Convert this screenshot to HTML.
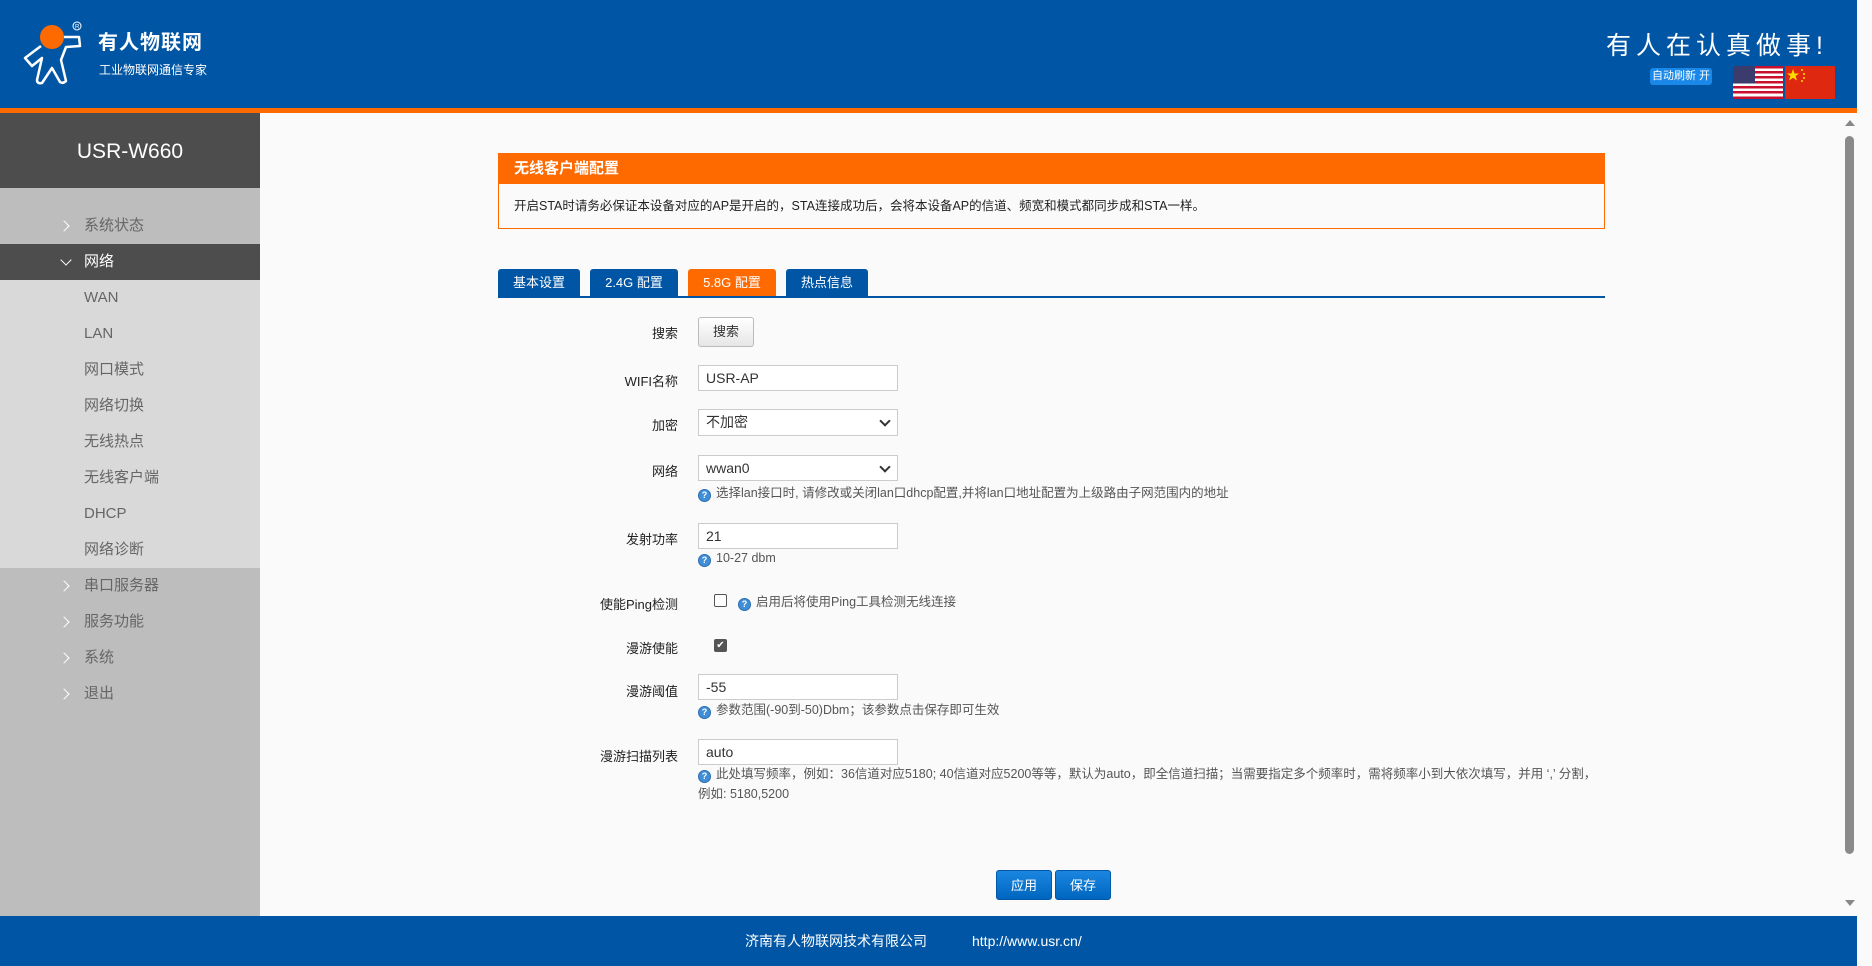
<!DOCTYPE html>
<html><head><meta charset="utf-8"><style>
*{margin:0;padding:0;box-sizing:border-box}
body{width:1872px;height:966px;overflow:hidden;background:#fafafa;font-family:"Liberation Sans","Noto Sans CJK SC",sans-serif;font-size:13px;color:#333;position:relative}
.hdr{position:absolute;left:0;top:0;width:1857px;height:108px;background:#0056a5}
.obar{position:absolute;left:0;top:108px;width:1857px;height:5px;background:#ff6a00}
.rstrip{position:absolute;left:1857px;top:0;width:15px;height:966px;background:#fafafa}
.side{position:absolute;left:0;top:113px;width:260px;height:803px;background:#bdbdbd}
.stitle{height:75px;background:#4d4d4d;color:#fff;font-size:21px;text-align:center;line-height:78px}
.it{position:absolute;left:0;width:260px;height:36px;line-height:36px;color:#666;font-size:15px;padding-left:84px}
.it .ar{position:absolute;left:60px;top:14px;width:8px;height:8px;border-right:1.5px solid #fff;border-top:1.5px solid #fff;transform:rotate(45deg)}
.it .dn{position:absolute;left:62px;top:12px;width:8px;height:8px;border-right:1.5px solid #fff;border-bottom:1.5px solid #fff;transform:rotate(45deg)}
.ft{position:absolute;left:0;top:916px;width:1857px;height:50px;background:#0056a5;color:#fff;font-size:14px;line-height:50px}
.lbl{position:absolute;width:180px;left:498px;text-align:right;font-size:13px;color:#222}
.inp{position:absolute;left:698px;width:200px;height:26px;background:#fff;border:1px solid #ccc;padding-left:7px;font-size:14px;line-height:24px;color:#333}
.sel::after{content:"";position:absolute;right:8px;top:7px;width:6px;height:6px;border-right:2px solid #333;border-bottom:2px solid #333;transform:rotate(45deg)}
.help{position:absolute;left:698px;font-size:12.5px;color:#555;line-height:22px}
.q{display:inline-block;width:13px;height:13px;border-radius:50%;background:#3f8fd8;border:1px solid #2a6db0;color:#fff;font-size:9px;text-align:center;line-height:11px;vertical-align:-1px;margin-right:5px;font-weight:bold}
.tab{position:absolute;top:269px;height:28px;line-height:28px;color:#fff;background:#0056a5;text-align:center;font-size:13px;border-radius:3px 3px 0 0}
.btn{position:absolute;top:870px;height:30px;line-height:30px;width:56px;background:linear-gradient(#1a86e0,#0066c0);color:#fff;text-align:center;border-radius:3px;font-size:13px;border:1px solid #0059a8}
</style></head><body>
<div class="hdr">
<svg style="position:absolute;left:22px;top:20px" width="66" height="68" viewBox="0 0 66 68">
<circle cx="30" cy="17" r="12" fill="#ff6a00"/>
<path d="M19 26 L3 38 L10 46 L20 38 L15 60 Q15 64 20 63 L30 48 L38 62 Q41 64 44 61 L39 40 L44 27 L58 26 L57 17 L42 17" fill="none" stroke="#fff" stroke-width="2.5" stroke-linejoin="round"/>
<circle cx="55" cy="6" r="4" fill="none" stroke="#fff" stroke-width="1"/>
<text x="53" y="8.5" fill="#fff" font-size="6">R</text>
</svg>
<div style="position:absolute;left:98px;top:26px;color:#fff;font-size:20px;font-weight:bold;letter-spacing:1px">有人物联网</div>
<div style="position:absolute;left:99px;top:61px;color:#fff;font-size:12px">工业物联网通信专家</div>
<div style="position:absolute;left:1606px;top:26px;color:#fff;font-size:25px;letter-spacing:5px">有人在认真做事!</div>
<div style="position:absolute;left:1650px;top:68px;width:62px;height:17px;background:#1a88e8;border-radius:3px;color:#fff;font-size:11px;text-align:center;line-height:17px">自动刷新 开</div>
<svg style="position:absolute;left:1733px;top:66px" width="50" height="33" viewBox="0 0 50 33">
<rect width="50" height="33" fill="#fff"/>
<g fill="#c8102e"><rect y="0" width="50" height="2.5"/><rect y="5" width="50" height="2.5"/><rect y="10" width="50" height="2.5"/><rect y="15" width="50" height="2.5"/><rect y="20" width="50" height="2.5"/><rect y="25" width="50" height="2.5"/><rect y="30.5" width="50" height="2.5"/></g>
<rect width="22" height="17.5" fill="#3c3b6e"/></svg>
<svg style="position:absolute;left:1785px;top:66px" width="50" height="33" viewBox="0 0 50 33">
<rect width="50" height="33" fill="#de2910"/><polygon points="8,3 9.5,7.5 14,7.5 10.5,10 12,14.5 8,11.8 4,14.5 5.5,10 2,7.5 6.5,7.5" fill="#ffde00"/>
<circle cx="17" cy="4" r="1" fill="#ffde00"/><circle cx="19" cy="8" r="1" fill="#ffde00"/><circle cx="19" cy="12" r="1" fill="#ffde00"/><circle cx="17" cy="15" r="1" fill="#ffde00"/></svg>
</div>
<div class="obar"></div>
<div class="rstrip"></div>
<div class="side">
<div class="stitle">USR-W660</div>
</div>
<div style="position:absolute;left:0;top:244px;width:260px;height:36px;background:#4d4d4d"></div>
<div style="position:absolute;left:0;top:280px;width:260px;height:288px;background:#d9d9d9"></div>
<div class="it" style="top:208px"><span class="ar"></span>系统状态</div>
<div class="it" style="top:244px;color:#fff"><span class="dn"></span>网络</div>
<div class="it" style="top:280px">WAN</div>
<div class="it" style="top:316px">LAN</div>
<div class="it" style="top:352px">网口模式</div>
<div class="it" style="top:388px">网络切换</div>
<div class="it" style="top:424px">无线热点</div>
<div class="it" style="top:460px">无线客户端</div>
<div class="it" style="top:496px">DHCP</div>
<div class="it" style="top:532px">网络诊断</div>
<div class="it" style="top:568px"><span class="ar"></span>串口服务器</div>
<div class="it" style="top:604px"><span class="ar"></span>服务功能</div>
<div class="it" style="top:640px"><span class="ar"></span>系统</div>
<div class="it" style="top:676px"><span class="ar"></span>退出</div>

<div style="position:absolute;left:498px;top:153px;width:1107px;height:76px;border:1px solid #ff6a00;background:#fafafa">
<div style="height:30px;background:#ff6a00;color:#fff;font-weight:bold;font-size:15px;line-height:30px;padding-left:15px">无线客户端配置</div>
<div style="padding-left:15px;line-height:44px;font-size:12.5px;color:#222">开启STA时请务必保证本设备对应的AP是开启的，STA连接成功后，会将本设备AP的信道、频宽和模式都同步成和STA一样。</div>
</div>
<div class="tab" style="left:498px;width:82px">基本设置</div>
<div class="tab" style="left:590px;width:88px">2.4G 配置</div>
<div class="tab" style="left:688px;width:88px;background:#ff6a00">5.8G 配置</div>
<div class="tab" style="left:786px;width:82px">热点信息</div>
<div style="position:absolute;left:498px;top:296px;width:1107px;height:2px;background:#0056a5"></div>

<div class="lbl" style="top:323px">搜索</div>
<div style="position:absolute;left:698px;top:317px;width:56px;height:30px;border:1px solid #bbb;border-radius:3px;background:linear-gradient(#fff,#e6e6e6);text-align:center;line-height:28px">搜索</div>
<div class="lbl" style="top:371px">WIFI名称</div>
<div class="inp" style="top:365px;width:200px">USR-AP</div>
<div class="lbl" style="top:415px">加密</div>
<div class="inp sel" style="top:409px;height:27px">不加密</div>
<div class="lbl" style="top:461px">网络</div>
<div class="inp sel" style="top:455px;height:26px">wwan0</div>
<div class="help" style="top:482px"><span class="q">?</span>选择lan接口时, 请修改或关闭lan口dhcp配置,并将lan口地址配置为上级路由子网范围内的地址</div>
<div class="lbl" style="top:529px">发射功率</div>
<div class="inp" style="top:523px">21</div>
<div class="help" style="top:547px"><span class="q">?</span>10-27 dbm</div>
<div class="lbl" style="top:594px">使能Ping检测</div>
<div style="position:absolute;left:714px;top:594px;width:13px;height:13px;border:1px solid #555;border-radius:2px;background:#fff"></div>
<div class="help" style="top:591px;left:738px"><span class="q">?</span>启用后将使用Ping工具检测无线连接</div>
<div class="lbl" style="top:638px">漫游使能</div>
<div style="position:absolute;left:714px;top:639px;width:13px;height:13px;border-radius:2px;background:#555;color:#fff;font-size:10px;line-height:13px;text-align:center">✔</div>
<div class="lbl" style="top:681px">漫游阈值</div>
<div class="inp" style="top:674px">-55</div>
<div class="help" style="top:699px"><span class="q">?</span>参数范围(-90到-50)Dbm；该参数点击保存即可生效</div>
<div class="lbl" style="top:746px">漫游扫描列表</div>
<div class="inp" style="top:739px">auto</div>
<div class="help" style="top:764px;width:900px;line-height:20px"><span class="q">?</span>此处填写频率，例如：36信道对应5180; 40信道对应5200等等，默认为auto，即全信道扫描；当需要指定多个频率时，需将频率小到大依次填写，并用 ‘,’ 分割，例如: 5180,5200</div>

<div class="btn" style="left:996px">应用</div>
<div class="btn" style="left:1055px">保存</div>

<div style="position:absolute;left:1845px;top:120px;width:0;height:0;border-left:5px solid transparent;border-right:5px solid transparent;border-bottom:6px solid #888"></div>
<div style="position:absolute;left:1845px;top:136px;width:9px;height:718px;background:#8a8a8a;border-radius:5px"></div>
<div style="position:absolute;left:1845px;top:900px;width:0;height:0;border-left:5px solid transparent;border-right:5px solid transparent;border-top:6px solid #888"></div>

<div class="ft"><span style="position:absolute;left:745px">济南有人物联网技术有限公司</span><span style="position:absolute;left:972px">http://www.usr.cn/</span></div>
</body></html>
